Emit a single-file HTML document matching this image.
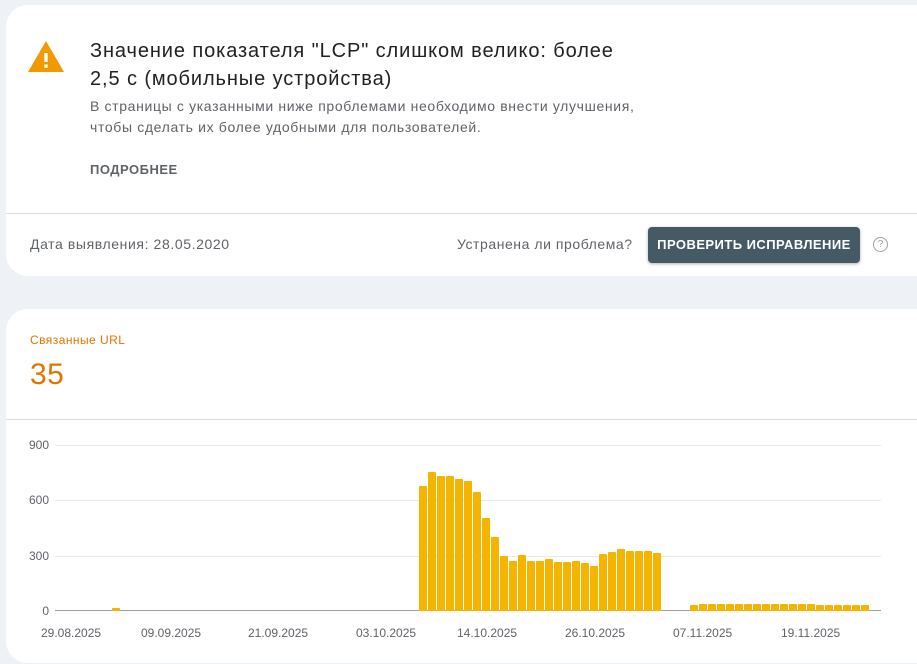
<!DOCTYPE html>
<html><head><meta charset="utf-8"><style>
html,body{margin:0;width:917px;height:664px;overflow:hidden}
body{background:#eef2f7;font-family:"Liberation Sans",sans-serif;position:relative}
.card{position:absolute;background:#fff;border-radius:22px}
.a{position:absolute;white-space:nowrap}
.bar{position:absolute;background:#f4b400;width:8px;border-radius:1px 1px 0 0}
.gl{position:absolute;left:55px;width:826px;height:1px;background:#e8e8e8}
.yl{position:absolute;right:868px;font-size:12px;color:#5f6368}
.xl{position:absolute;top:626px;font-size:12px;color:#5f6368}
</style></head><body>
<div class="card" style="left:6px;top:5px;width:940px;height:271px"></div>
<svg style="position:absolute;left:27px;top:40px" width="38" height="32" viewBox="0 0 38 32"><path d="M19 1 L37 32 L1 32 Z" fill="#f29900"/><rect x="17.3" y="13" width="3.4" height="9" fill="#fff"/><rect x="17.3" y="24.5" width="3.4" height="3.4" fill="#fff"/></svg>
<div class="a" style="left:90px;top:37px;font-size:20px;line-height:28px;color:#202124;letter-spacing:.9px">Значение показателя "LCP" слишком велико: более<br>2,5 с (мобильные устройства)</div>
<div class="a" style="left:90px;top:96px;font-size:14px;line-height:21px;color:#5f6368;letter-spacing:.65px">В страницы с указанными ниже проблемами необходимо внести улучшения,<br>чтобы сделать их более удобными для пользователей.</div>
<div class="a" style="left:90px;top:162px;font-size:13px;font-weight:bold;color:#5f6368;letter-spacing:.5px">ПОДРОБНЕЕ</div>
<div style="position:absolute;left:6px;top:213px;width:911px;height:1px;background:#dadce0"></div>
<div class="a" style="left:30px;top:236px;font-size:14px;color:#5f6368;letter-spacing:.6px">Дата выявления: 28.05.2020</div>
<div class="a" style="left:457px;top:236px;font-size:14px;color:#5f6368;letter-spacing:.55px">Устранена ли проблема?</div>
<div class="a" style="left:648px;top:227px;width:212px;height:36px;background:#455a64;border-radius:4px;color:#fff;font-size:13px;font-weight:bold;line-height:36px;text-align:center;letter-spacing:.45px;box-shadow:0 1px 3px rgba(0,0,0,.3)">ПРОВЕРИТЬ ИСПРАВЛЕНИЕ</div>
<div class="a" style="left:873px;top:237px;width:13px;height:13px;border:1.3px solid #9aa0a6;border-radius:50%;font-size:10px;line-height:13px;text-align:center;color:#9aa0a6">?</div>

<div class="card" style="left:6px;top:309px;width:940px;height:354px"></div>
<div class="a" style="left:30px;top:333px;font-size:12px;color:#e37400;letter-spacing:.45px">Связанные URL</div>
<div class="a" style="left:30px;top:358px;font-size:30px;color:#e37400;letter-spacing:.5px">35</div>
<div style="position:absolute;left:6px;top:419px;width:911px;height:1px;background:#dadce0"></div>
<div class="gl" style="top:445px"></div><div class="gl" style="top:500px"></div><div class="gl" style="top:556px"></div>
<div style="position:absolute;left:55px;top:610px;width:826px;height:1px;background:#9e9e9e"></div>
<div class="yl" style="top:438px">900</div><div class="yl" style="top:493px">600</div><div class="yl" style="top:549px">300</div><div class="yl" style="top:604px">0</div>
<div class="xl" style="left:41px">29.08.2025</div><div class="xl" style="left:141px">09.09.2025</div><div class="xl" style="left:248px">21.09.2025</div><div class="xl" style="left:356px">03.10.2025</div><div class="xl" style="left:457px">14.10.2025</div><div class="xl" style="left:565px">26.10.2025</div><div class="xl" style="left:673px">07.11.2025</div><div class="xl" style="left:781px">19.11.2025</div>
<div id="bars"></div>
<script>
var h=[125,139,135,135,132,130,119,93,74,55,50,56,50,50,52,49,49,50,48,45,57,59,62,60,60,60,58],s='';
h.forEach(function(v,i){s+='<div class="bar" style="left:'+(419+i*9)+'px;top:'+(611-v)+'px;height:'+v+'px"></div>'});
for(var i=0;i<20;i++){var v=(i==0||i>13)?6:7;s+='<div class="bar" style="left:'+(690+i*9)+'px;top:'+(611-v)+'px;height:'+v+'px"></div>'}
s+='<div class="bar" style="left:112px;top:608px;height:3px"></div>';
document.getElementById('bars').innerHTML=s;
</script>
</body></html>
